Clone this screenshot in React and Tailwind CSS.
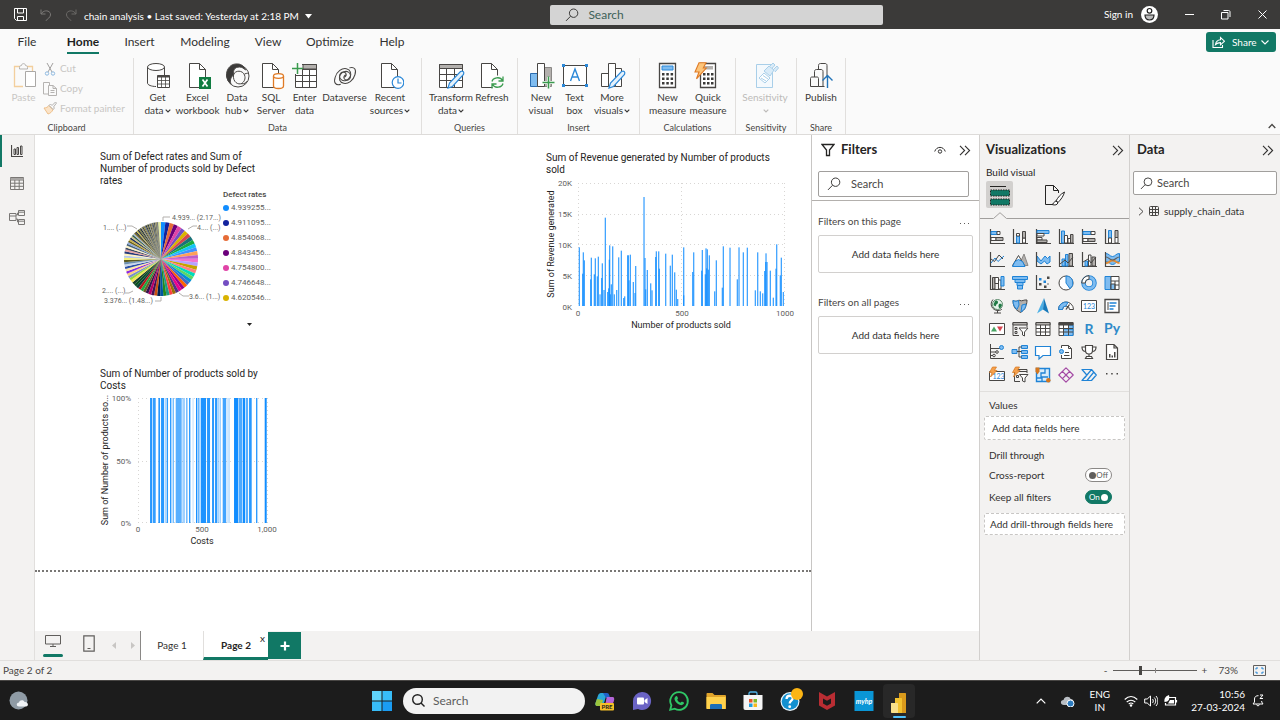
import React from "react";

const K = "#484644";
const B = "#1f83d6";
const L = "#7fbcf0";
const G = "#b3b0ad";

function Svg({ w = 16, h, vb, className = "", children }) {
  return (
    <svg
      width={w}
      height={h || w}
      viewBox={vb || `0 0 ${w} ${h || w}`}
      fill="none"
      stroke={K}
      strokeWidth="1"
      className={`shrink-0 ${className}`}
      aria-hidden="true"
    >
      {children}
    </svg>
  );
}

const Chevron = ({ className = "" }) => (
  <Svg w={6} h={4} className={`ml-px inline-block align-middle ${className}`}>
    <path d="M.7.7 3 3 5.3.7" stroke="currentColor" strokeWidth="1.2" />
  </Svg>
);

const DoubleChevron = () => (
  <Svg w={12} h={11}>
    <path d="M1 .8 5.6 5.5 1 10.2M6 .8l4.6 4.7L6 10.2" stroke="#323130" strokeWidth="1.1" />
  </Svg>
);

const Magnifier = ({ w = 14, className = "" }) => (
  <Svg w={w} vb="0 0 14 14" className={className}>
    <circle cx="8.6" cy="5.2" r="4.2" stroke="#3b3a39" />
    <path d="M5.6 8.2 1 12.9" stroke="#3b3a39" />
  </Svg>
);

/* ---------- Ribbon icons ---------- */

const Doc = () => (
  <>
    <path d="M2.5 1.5h10l6 6v18h-16z" fill="#fff" />
    <path d="M12.5 1.5v6h6" />
  </>
);

const ribbonIcons = {
  getData: (
    <>
      <path d="M2.5 5v16c0 2 4 3.500 8.500 3.500M19.500 5v8" />
      <ellipse cx="11" cy="5" rx="8.500" ry="3.500" fill="#fff" />
      <path d="M12.500 13.500h12v12h-12z" fill="#fff" />
      <path d="M12.500 14.500h12" strokeWidth="2" />
      <path d="M12.500 18.500h12M12.500 22h12M16.500 15v10M20.500 15v10" strokeWidth=".8" />
    </>
  ),
  excel: (
    <>
      <g transform="translate(2 0)"><Doc /></g>
      <path d="M14 15h12v12H14z" fill="#107c41" stroke="none" />
      <path d="m17.500 17.500 5 7m0-7-5 7" stroke="#fff" strokeWidth="1.700" />
    </>
  ),
  hub: (
    <>
      <circle cx="14" cy="14" r="11" />
      <path d="M14 2C7 1 2 7 2.500 14c.3 3 2 6 4.500 8-1.500-4 0-7 3-9.500C8.500 8 11 5 15.500 5 18 5 20 6.500 21.500 8 20.500 4.500 17 2 14 2z" fill="#3b3a39" />
      <path d="M9.500 12.500c2-4.500 9-4.500 11 .5 1.500 4-.5 7-3 8.500-3 1.500-9-1-8-9z" />
      <path d="M20.500 12c2.500-1 4-1 4.500 0M17 21.700c3.500.500 5-1 6.500-2.700" />
    </>
  ),
  sql: (
    <>
      <g transform="translate(2 0)"><Doc /></g>
      <path d="M15.500 14v10c0 1.500 2 2.500 5 2.500s5-1 5-2.500V14" fill="#fff" stroke="#e07b26" strokeWidth="1.300" />
      <ellipse cx="20.500" cy="14" rx="5" ry="2.300" fill="#fff" stroke="#e07b26" strokeWidth="1.300" />
    </>
  ),
  enter: (
    <>
      <path d="M3.500 2.500h21v23h-21z" fill="#fff" />
      <path d="M11 2.500h13.500V7H11z" fill={G} />
      <path d="M3.500 13.500h21M3.500 19.500h21M10.500 7v18.500M17.500 7v18.500M11 7.500h13.500" />
      <path d="M0 1h10v11H0z" fill="#fafafa" stroke="none" />
      <path d="M5.500 1v11M0 6.500h11" stroke="#3a9b4e" strokeWidth="1.500" />
    </>
  ),
  dataverse: (
    <g transform="translate(1 2) scale(.86)" strokeWidth="1.200">
      <path d="M19 4.500c6-2 8.500 2 6.500 8-2 7-8 11-13 10-5-1-6.500-6-4-10 2-3.500 6.500-5 9.500-3 3 1.800 3 6 1 8-2 2-5 1.500-6-.5-1-2 .5-4.500 2.500-4" />
      <path d="M9 23.500c-6 2-8.500-2-6.500-8 2-7 8-11 13-10 5 1 6.500 6 4 10-2 3.500-6.500 5-9.500 3-3-1.800-3-6-1-8 2-2 5-1.500 6 .5 1 2-.5 4.500-2.500 4" />
    </g>
  ),
  recent: (
    <>
      <g transform="translate(2 0)"><Doc /></g>
      <circle cx="21" cy="20.500" r="5.800" fill="#fff" stroke="#2b88d8" strokeWidth="1.200" />
      <path d="M21 16.500v4.500h3.500" stroke="#2b88d8" strokeWidth="1.200" />
    </>
  ),
  transform: (
    <>
      <path d="M1.500 2.500h23v23h-23z" fill="#fff" />
      <path d="M1.500 2.500h23v4h-23z" fill={G} />
      <path d="M1.500 12.500h23M1.500 18.500h23M8.500 7v18.500M16.500 7v18.500" />
      <path d="m10 26 1.500-5L22.500 9.500c2.500-1 4 .5 3 3L14.500 24.500z" fill="#e4f1fb" stroke="#2b88d8" strokeWidth="1.200" />
    </>
  ),
  refresh: (
    <>
      <Doc />
      <circle cx="18.500" cy="20.500" r="7" fill="#fafafa" stroke="none" />
      <path d="M13 19.500c1-4 8-5.500 10.500-1M24 14.500v4.500h-4.500M24 21.500c-1 4-8 5.500-10.500 1M13 26.500V22h4.500" stroke="#3a9b4e" strokeWidth="1.300" />
    </>
  ),
  newVisual: (
    <>
      <path d="M2.500 11.500h7v13h-7z" fill={L} stroke="#2b6cb0" />
      <path d="M16.500 5.500h7v19h-7z" fill={G} stroke="#8a8886" />
      <path d="M9.500 1.500h7v23h-7z" fill="#fff" />
      <path d="M20.500 15v11.500M14.500 20.500h12" stroke="#fafafa" strokeWidth="3" />
      <path d="M20.500 14.500v12M14.500 20.500h12" stroke="#3a9b4e" strokeWidth="1.500" />
    </>
  ),
  textBox: (
    <>
      <path d="M1.500 3.500h23v20h-23z" fill="#fff" />
      <path d="M0 2h3v3H0zM23 2h3v3h-3zM0 22h3v3H0zM23 22h3v3h-3z" fill="#2b88d8" stroke="none" />
      <path d="m8.500 19 4.500-12 4.500 12M10 15h6" stroke="#2b88d8" strokeWidth="1.400" />
    </>
  ),
  moreVisuals: (
    <>
      <path d="M2.500 11.500h7v13h-7zM16.500 6.500h6v18h-6z" fill="#fff" />
      <path d="M9.500 1.500h7v23h-7z" fill="#fff" />
      <path d="m10 26 1.500-5L22.500 9.500c2.500-1 4 .5 3 3L14.500 24.500z" fill="#e4f1fb" stroke="#2b88d8" strokeWidth="1.200" />
    </>
  ),
  calc: (
    <>
      <path d="M4.500 1.500h16v24h-16z" fill="#fff" strokeWidth="1.300" />
      <path d="M7 4h11v4H7z" fill="#7fbcf0" stroke="#2b88d8" />
      <path d="M7 11h2.500v2.500H7zM11.300 11h2.500v2.500h-2.500zM15.600 11h2.500v2.500h-2.500zM7 15.500h2.500V18H7zM11.300 15.500h2.500V18h-2.500zM15.600 15.500h2.500V18h-2.500zM7 20h2.500v2.500H7zM11.300 20h2.500v2.500h-2.500zM15.600 20h2.500v2.500h-2.500z" fill="#3b3a39" stroke="none" />
    </>
  ),
  quick: (
    <>
      <path d="M5.500 1.500h15v24h-15z" fill="#fff" strokeWidth="1.300" />
      <path d="M8 4h10v3.500H8z" fill={G} stroke="none" />
      <path d="M8 11h2.500v2.500H8zM12 11h2.500v2.500H12zM16 11h2.500v2.500H16zM8 15.500h2.500V18H8zM12 15.500h2.500V18H12zM16 15.500h2.500V18H16zM8 20h2.500v2.500H8zM12 20h2.500v2.500H12zM16 20h2.500v2.500H16z" fill="#3b3a39" stroke="none" />
      <path d="M4 .8h7L8.300 6h3L1.500 16.800 4 10H0z" fill="#fcc57b" stroke="#e07b26" strokeWidth="1.100" />
    </>
  ),
  sensitivity: (
    <g stroke="#a9cfe9">
      <path d="M4.500 2.500h16v23h-16z" fill="#f4f9fd" />
      <path d="m7 16 5-5 6 5-5 5z" fill="#fff" />
      <path d="m9 16 5 3M11 13.500l5 3.500" />
      <path d="m12 9 5-5 5 4-4 6zM18 4l3-3 2 2-2 2.500M21 8l4-4 1.500 2-3.500 4" fill="#d9ebf8" />
    </g>
  ),
  publish: (
    <>
      <path d="M10.500 24.500V3.500c0-1.500 1-2 2-2h4.500c1 0 2 .5 2 2v12" />
      <path d="M6.500 16V9.500c0-1.500 1-2 2-2h4.500c1 0 2 .5 2 2v15" fill="#fafafa" />
      <path d="M2.500 24.500v-8c0-1 .5-1.500 1.500-1.500h5c1 0 1.500.5 1.500 1.500v8zM10.500 24.500h6" fill="#fafafa" />
      <path d="M19.500 26V14M14.500 18.500l5-5 5 5" stroke="#2173b8" strokeWidth="1.400" />
    </>
  ),
};

const ribbonGroups = [
  {
    name: "Data",
    cls: "w-[288px] pl-[6px]",
    items: [
      ["getData", "Get", "data", true, "w-[35px]"],
      ["excel", "Excel", "workbook", false, "w-[45px]"],
      ["hub", "Data", "hub", true, "w-[34px]"],
      ["sql", "SQL", "Server", false, "w-[34px]"],
      ["enter", "Enter", "data", false, "w-[33px]"],
      ["dataverse", "Dataverse", "", false, "w-[47px]"],
      ["recent", "Recent", "sources", true, "w-[44px]"],
    ],
  },
  {
    name: "Queries",
    cls: "w-[96px] pl-[6px]",
    items: [
      ["transform", "Transform", "data", true, "w-[46px]"],
      ["refresh", "Refresh", "", false, "w-[36px]"],
    ],
  },
  {
    name: "Insert",
    cls: "w-[122px] pl-[6px]",
    items: [
      ["newVisual", "New", "visual", false, "w-[34px]"],
      ["textBox", "Text", "box", false, "w-[33px]"],
      ["moreVisuals", "More", "visuals", true, "w-[42px]"],
    ],
  },
  {
    name: "Calculations",
    cls: "w-[96px] pl-[8px]",
    items: [
      ["calc", "New", "measure", false, "w-[39px]"],
      ["quick", "Quick", "measure", false, "w-[42px]"],
    ],
  },
  {
    name: "Sensitivity",
    cls: "w-[61px] pl-[6px]",
    items: [["sensitivity", "Sensitivity", "", true, "w-[46px]", true]],
  },
  {
    name: "Share",
    cls: "w-[49px] pl-[3px]",
    items: [["publish", "Publish", "", false, "w-[42px]"]],
  },
];

function RibbonButton({ item }) {
  const [icon, line1, line2, menu, width, disabled] = item;
  return (
    <button
      disabled={disabled}
      className={`flex shrink-0 flex-col items-center whitespace-nowrap text-[10px] leading-[13px] ${width} ${
        disabled ? "text-[#bdbbb9]" : "text-[#3b3a39]"
      }`}
    >
      <Svg w={28} vb="-1 0 28 28">{ribbonIcons[icon]}</Svg>
      <span className="mt-px">{line1}</span>
      <span>
        {line2}
        {menu && <Chevron />}
      </span>
    </button>
  );
}

function TitleBar() {
  return (
    <header className="grid h-[29px] shrink-0 grid-cols-[43fr_26fr_31fr] items-center bg-[#3b3a39] text-[10px] text-white">
      <div className="flex items-center pl-[14px]">
        <button aria-label="Save">
          <Svg w={13}>
            <path d="M.5.500h12v12H2.500l-2-2zM3.500.5v4.500h6V.5M3.500 12.500v-4h6v4" stroke="#fff" />
          </Svg>
        </button>
        <button aria-label="Undo" className="ml-[13px]">
          <Svg w={12}>
            <path d="M1 .5V5h4.500M1 5c3-5 10-3.500 9.500 1-.3 2.500-3 4-5 6" stroke="#7b7977" />
          </Svg>
        </button>
        <button aria-label="Redo" className="ml-[13px]">
          <Svg w={12}>
            <path d="M11 .5V5H6.500M11 5C8 0 1 1.500 1.500 6c.3 2.500 3 4 5 6" stroke="#6b6967" />
          </Svg>
        </button>
        <button className="ml-[7px] mt-[3px] flex items-center gap-[6px] whitespace-nowrap">
          chain analysis • Last saved: Yesterday at 2:18 PM
          <Svg w={7} h={5}>
            <path d="M0 0h7L3.500 4.500z" fill="#fff" stroke="none" />
          </Svg>
        </button>
      </div>
      <label className="flex h-[20px] items-center rounded-xs bg-[#d4d4d4] pl-[15px]">
        <Magnifier />
        <input
          aria-label="Search"
          placeholder="Search"
          className="ml-[9px] min-w-0 flex-1 bg-transparent text-[12px] text-[#333] outline-none placeholder:text-[#3d6157]"
        />
      </label>
      <div className="flex items-center justify-end pr-[13px]">
        <button className="flex items-center gap-[8px]">
          Sign in
          <Svg w={17}>
            <circle cx="8.500" cy="8.500" r="8.500" fill="#fff" stroke="none" />
            <circle cx="8.500" cy="4.800" r="2.300" stroke="#222" strokeWidth="1.200" />
            <path d="M4 9h9c0 3-1.500 5-4.500 5S4 12 4 9z" fill="#bbb" stroke="#222" strokeWidth="1.200" />
          </Svg>
        </button>
        <button aria-label="Minimize" className="ml-[27px]">
          <Svg w={9}><path d="M0 4.500h9" stroke="#fff" /></Svg>
        </button>
        <button aria-label="Restore" className="ml-[27px]">
          <Svg w={10}>
            <path d="M.5 2.500h6.500v6.500H.5zM2.500.500h5c1 0 1.500.5 1.500 1.500v5" stroke="#fff" />
          </Svg>
        </button>
        <button aria-label="Close" className="ml-[27px]">
          <Svg w={9}><path d="m.5.500 8 8m0-8-8 8" stroke="#fff" /></Svg>
        </button>
      </div>
    </header>
  );
}

const menuTabs = [
  ["File", "w-[54px]"],
  ["Home", "w-[58px]"],
  ["Insert", "w-[55px]"],
  ["Modeling", "w-[76px]"],
  ["View", "w-[50px]"],
  ["Optimize", "w-[74px]"],
  ["Help", "w-[50px]"],
];

function Ribbon() {
  return (
    <section className="shrink-0 border-b border-[#dddbd9] bg-[#fafafa]">
      <div className="flex h-[29px] items-center justify-between pr-[4px]">
        <nav className="flex h-full text-[12px] text-[#323130]">
          {menuTabs.map(([name, width]) => (
            <button key={name} className={`flex flex-col items-center ${width}`}>
              <span
                className={`flex h-[25px] items-center ${
                  name === "Home" ? "border-b-2 border-[#117865] pt-[2px] font-bold text-[#201f1e]" : ""
                }`}
              >
                {name}
              </span>
            </button>
          ))}
        </nav>
        <button className="mb-[3px] flex h-[20px] w-[70px] items-center rounded-[3px] bg-[#117865] pl-[6px] text-[10px] text-white">
          <Svg w={13} h={12}>
            <path d="M1 4v7.500h9.500V9M3.500 8.500c.5-3 2-4.500 5-4.700V1.500l4 3.700-4 3.600V6.600c-2 0-3.500.5-5 1.900z" stroke="#fff" strokeWidth="1.100" />
          </Svg>
          <span className="ml-[7px]">Share</span>
          <Svg w={8} h={5} className="ml-[4px]">
            <path d="m.5.500 3.500 3.500L7.500.5" stroke="#fff" strokeWidth="1.100" />
          </Svg>
        </button>
      </div>
      <div className="flex h-[76px] items-stretch">
        <div className="flex w-[133px] shrink-0 flex-col">
          <div className="flex flex-1 text-[10px] text-[#c8c6c4]">
            <button disabled className="flex w-[43px] flex-col items-center pl-[4px] pt-[4px] leading-[13px]">
              <Svg w={28}>
                <path d="M10 4.500H4.500v20H13M17 4.500h5.500V9" stroke="#f3cf9d" strokeWidth="1.300" />
                <path d="M9.500 5.500c0-1.500 1-2 2-2 0-2.500 4-2.500 4 0 1 0 2 .5 2 2v1.500h-8z" stroke="#b5b3b1" />
                <path d="M15.500 9.500h10v15h-10z" fill="#fff" stroke="#aaa8a6" />
              </Svg>
              <span className="mt-px">Paste</span>
            </button>
            <div className="flex flex-col">
              <button disabled className="flex h-[20px] items-center gap-[3px] pt-px">
                <Svg w={14}>
                  <path d="m4 1 5 9M10 1 5 10" stroke="#a3a1a0" />
                  <circle cx="4" cy="11.500" r="1.700" stroke="#8db9e0" />
                  <circle cx="10" cy="11.500" r="1.700" stroke="#8db9e0" />
                </Svg>
                Cut
              </button>
              <button disabled className="flex h-[20px] items-center gap-[3px] pt-px">
                <Svg w={14}>
                  <path d="M6 12H.5V.500h6V3" stroke="#b5b3b1" />
                  <path d="M5.500 3.500H10l3.500 3v7h-8zM10 3.500v3h3.500M7.500 8.500h4M7.500 10.500h4" stroke="#b5b3b1" />
                </Svg>
                Copy
              </button>
              <button disabled className="flex h-[20px] items-center gap-[3px] whitespace-nowrap">
                <Svg w={14}>
                  <path d="M1 7c2 0 4-1 5-2.500l4 4C9 11 7 12.500 5 13z" fill="#fbe3c7" stroke="#eec08b" />
                  <path d="m6 4.500 1.500-1.500L9 4.500 12.500 1 13.500 2 10.500 6l1 1-1.500 1.500z" stroke="#b5b3b1" />
                </Svg>
                Format painter
              </button>
            </div>
          </div>
          <span className="h-[13px] text-center text-[9px] leading-[13px] text-[#484644]">Clipboard</span>
        </div>
        {ribbonGroups.map((g) => (
          <div key={g.name} className="flex shrink-0 flex-col">
            <div className={`flex flex-1 border-l border-[#e1dfdd] pt-[4px] ${g.cls}`}>
              {g.items.map((it) => (
                <RibbonButton key={it[0]} item={it} />
              ))}
            </div>
            <span className="h-[13px] border-l border-[#e1dfdd] text-center text-[9px] leading-[13px] text-[#484644]">
              {g.name}
            </span>
          </div>
        ))}
        <div className="flex flex-1 items-end justify-end border-l border-[#e1dfdd] pb-[5px] pr-[4px]">
          <button aria-label="Collapse ribbon" className="flex">
            <Svg w={8} h={6}><path d="M.7 5 4 1.500 7.300 5" strokeWidth="1.300" /></Svg>
          </button>
        </div>
      </div>
    </section>
  );
}

function ViewRail() {
  return (
    <nav className="flex w-[35px] shrink-0 flex-col border-r border-[#e1dfdd] bg-[#f3f2f1]">
      <button aria-label="Report view" className="flex h-[32px] items-center border-l-2 border-[#117865] pl-[9px]">
        <Svg w={12}>
          <path d="M.5 0v11.500H12" strokeWidth="1.200" />
          <path d="M3 4h1.500v5.500H3zM6 2.500h1.500v7H6zM9.500 1h1.500v8.500H9.500z" />
        </Svg>
      </button>
      <button aria-label="Table view" className="flex h-[33px] items-center pl-[10px]">
        <Svg w={14} h={13}>
          <path d="M.5.500h13v12H.5zM.5 3h13M.5 6.200h13M.5 9.300h13M4.800 3v9.500M9.200 3v9.500" stroke="#797775" />
          <path d="M.5 1h13v2H.5z" fill="#a8a6a4" stroke="none" />
        </Svg>
      </button>
      <button aria-label="Model view" className="flex h-[34px] items-center pl-[9px]">
        <Svg w={16} h={15}>
          <path d="M.5 3.500h6.500v7H.5zM9.500.5h6v5h-6zM9.500 9.500h6v5h-6zM.5 6H7M9.500 2.200h6M9.500 11.200h6M7 5h1.500V3h1M7 9h1.500v3h1" stroke="#797775" />
        </Svg>
      </button>
    </nav>
  );
}

/* ---------- Report visuals ---------- */

const CHART = "font-[Roboto,sans-serif]";

const sliceColors = [
  "#118dff", "#12239e", "#e66c37", "#6b007b", "#e044a7", "#744ec2", "#d9b300", "#d64550", "#197278", "#1aab40",
  "#15c6f4", "#4092ff", "#ffa058", "#be5dc9", "#f472d0", "#b5a1ff", "#c4a200", "#ff8080", "#00dbbc", "#5bd667",
  "#0091d5", "#4668c5", "#ff6300", "#99008a", "#ec008c", "#533285", "#99700a", "#ff4141", "#1f9a85", "#25891c",
  "#0057a2", "#002050", "#c94f0f", "#450f54", "#b60064", "#34124f", "#6a5a29", "#1aab40", "#ba141a", "#0c3d37",
  "#0b511f", "#1b3f2a", "#f9e55a", "#9ad93b", "#7c8fd0", "#ffd27a", "#8a2be2", "#ffe6a8", "#2a4fa8", "#c9d7ea",
  "#6d8fb0", "#5b5b1f", "#f6f07a", "#b7c9e8", "#fff2c0", "#273a7a", "#e8a0a0", "#3c4a63", "#fdf3c9", "#46627a",
  "#8fa9d8", "#6b5f12", "#c8b04a", "#1f2f5c", "#c9c08a", "#2f5a46", "#a7b6cc", "#75681c", "#2b2f3a", "#c7b94e",
];

const lateColors = ["#30343a", "#7a7d45", "#1d2733", "#9b9a70", "#3f4148", "#8f8432", "#5d6a78"];

const slices = (() => {
  const weights = Array.from({ length: 99 }, (_, i) => 2.15 - i * 0.0205);
  const total = weights.reduce((a, b) => a + b, 0);
  let angle = -Math.PI / 2;
  return weights.map((w, i) => {
    const next = angle + (w / total) * Math.PI * 2;
    const p = (a) => `${(37 * Math.cos(a)).toFixed(2)} ${(37 * Math.sin(a)).toFixed(2)}`;
    const d = `M0 0L${p(angle)}A37 37 0 0 1 ${p(next)}Z`;
    angle = next;
    return { d, fill: i < sliceColors.length ? sliceColors[i] : i > 91 ? "#d9e48a" : lateColors[i % 7] };
  });
})();

const legend = [
  ["4.939255...", "#118dff"],
  ["4.911095...", "#12239e"],
  ["4.854068...", "#e66c37"],
  ["4.843456...", "#6b007b"],
  ["4.754800...", "#e044a7"],
  ["4.746648...", "#744ec2"],
  ["4.620546...", "#d9b300"],
];

function VisualTitle({ lines }) {
  return (
    <h3 className="text-[10px] leading-[12px] text-[#252423]">
      {lines.map((l) => (
        <span key={l} className="block whitespace-nowrap">{l}</span>
      ))}
    </h3>
  );
}

function DefectPie() {
  return (
    <article className={`absolute left-[65px] top-[16px] w-[172px] ${CHART}`}>
      <VisualTitle lines={["Sum of Defect rates and Sum of", "Number of products sold by Defect", "rates"]} />
      <div className="flex">
        <svg width="123" height="120" className="shrink-0 overflow-visible" fontSize="7" fill="#605e5c" stroke="none">
          <g transform="translate(61 72)">
            {slices.map((s, i) => (
              <path key={i} d={s.d} fill={s.fill} />
            ))}
          </g>
          <path d="M63 34v-4h7M88 42l5-3h4M37 42l-5-3h-5M33 104l-4 2h-4M61 110v4h-6M79 106l4 3h6" fill="none" stroke="#b3b0ad" />
          <text x="72" y="33">4.939... (2.17...)</text>
          <text x="97" y="43">4.... (...)</text>
          <text x="3" y="43">1.... (...)</text>
          <text x="2" y="106">2.... (...)</text>
          <text x="4" y="116">3.376... (1.48...)</text>
          <text x="89" y="112">3.6... (1...)</text>
        </svg>
        <div className="pt-[3px]">
          <p className="text-[8px] font-medium leading-[10px] text-[#484644]">Defect rates</p>
          <ul>
            {legend.map(([label, color]) => (
              <li key={label} className="flex h-[15px] items-center gap-[2px] text-[8px] text-[#605e5c]">
                <span className="size-[6px] rounded-full" style={{ background: color }} />
                {label}
              </li>
            ))}
          </ul>
          <Svg w={5} h={3} className="ml-[24px] mt-[18px]">
            <path d="M0 0h5L2.500 3z" fill="#252423" stroke="none" />
          </Svg>
        </div>
      </div>
    </article>
  );
}

/* Column positions and heights, in thirds of a pixel of the plot area. */
const revenueColumns = [
  [3, 176], [13, 97], [15, 161], [18, 137], [37, 80], [39, 145], [48, 95], [51, 143], [57, 89], [60, 148],
  [65, 35], [70, 84], [72, 128], [77, 48], [81, 265], [88, 42], [91, 53], [93, 139], [94, 182], [96, 35],
  [99, 65], [103, 179], [108, 35], [115, 48], [121, 146], [129, 166], [136, 24], [139, 29], [148, 152], [150, 152],
  [152, 77], [156, 154], [165, 72], [170, 39], [172, 120], [197, 327], [200, 144], [202, 50], [207, 108], [217, 68],
  [221, 47], [232, 147], [234, 164], [241, 164], [243, 112], [262, 157], [276, 121], [282, 154], [289, 101], [294, 49],
  [298, 21], [316, 176], [316, 32], [343, 102], [346, 161], [370, 106], [372, 168], [381, 95], [383, 173], [385, 113],
  [387, 170], [390, 109], [393, 152], [409, 44], [414, 137], [432, 55], [435, 179], [455, 175], [477, 80], [482, 176],
  [495, 161], [507, 175], [531, 47], [538, 161], [546, 44], [553, 38], [559, 105], [563, 158], [562, 132], [566, 132],
  [576, 106], [585, 25], [593, 112], [595, 185], [606, 92], [609, 145], [615, 42],
];

function RevenueColumns() {
  return (
    <article className={`absolute left-[511px] top-[17px] w-[260px] ${CHART}`}>
      <VisualTitle lines={["Sum of Revenue generated by Number of products", "sold"]} />
      <svg width="256" height="160" fontSize="8" fill="#605e5c" className="-mt-[2px] overflow-visible">
        <g stroke="#d8d6d4" strokeDasharray="1 3">
          {[9, 40, 70, 101].map((y) => (
            <path key={y} d={`M32 ${y}.500H239`} />
          ))}
          <path d="M32.500 9v123M135.500 9v123M238.500 9v123" />
        </g>
        {revenueColumns.map(([x, h], i) => (
          <rect key={i} x={32.3 + x / 3 - 0.6} y={132 - h / 3} width="1.3" height={h / 3} fill="#118dff" fillOpacity=".8" />
        ))}
        <g textAnchor="end">
          {["20K", "15K", "10K", "5K", "0K"].map((t, i) => (
            <text key={t} x="26" y={12 + i * 31}>{t}</text>
          ))}
        </g>
        <g textAnchor="middle">
          <text x="32" y="142">0</text>
          <text x="136" y="142">500</text>
          <text x="239" y="142">1000</text>
          <text x="135" y="154" fontSize="9" fill="#252423">Number of products sold</text>
          <text transform="translate(8 70) rotate(-90)" fontSize="9" fill="#252423">
            Sum of Revenue generated
          </text>
        </g>
      </svg>
    </article>
  );
}

/* Start, width and opacity of each column, in thirds of a pixel. */
const costColumns = [
  [37, 6, 0.9], [45, 9, 0.85], [62, 5, 0.9], [70, 9, 0.9], [81, 8, 0.35], [88, 3, 0.9], [97, 4, 0.9], [105, 3, 0.8],
  [114, 18, 0.7], [134, 8, 0.4], [146, 3, 0.9], [154, 4, 0.9], [165, 2, 0.4], [175, 4, 1], [182, 3, 1], [189, 16, 0.95],
  [208, 9, 0.9], [223, 6, 0.9], [232, 7, 0.9], [242, 3, 0.6], [247, 2, 0.6], [255, 10, 0.8], [267, 2, 0.5],
  [272, 4, 0.35], [289, 13, 1], [304, 9, 0.75], [315, 7, 1], [324, 7, 0.7], [334, 8, 0.9], [355, 4, 0.9], [381, 6, 1],
];

function CostColumns() {
  return (
    <article className={`absolute left-[65px] top-[233px] w-[186px] ${CHART}`}>
      <VisualTitle lines={["Sum of Number of products sold by", "Costs"]} />
      <svg width="186" height="160" fontSize="8" fill="#605e5c" className="-mt-px overflow-visible">
        <g stroke="#d8d6d4" strokeDasharray="1 3">
          <path d="M38 7.500h130M38 70.500h130M38 131.500h130M38.500 7v125M102.500 7v125M167.500 7v125" />
        </g>
        {costColumns.map(([x, w, o]) => (
          <rect key={x} x={37.7 + x / 3} y="7" width={w / 3} height="125" fill="#118dff" fillOpacity={o} />
        ))}
        <g textAnchor="end">
          <text x="31" y="10">100%</text>
          <text x="31" y="73">50%</text>
          <text x="31" y="135">0%</text>
        </g>
        <g textAnchor="middle">
          <text x="38" y="141">0</text>
          <text x="102" y="141">500</text>
          <text x="167" y="141">1,000</text>
          <text x="102" y="153" fontSize="9" fill="#252423">Costs</text>
          <text transform="translate(8 69) rotate(-90)" fontSize="9" fill="#252423">
            Sum of Number of products so...
          </text>
        </g>
      </svg>
    </article>
  );
}

function FieldWell({ children, cls }) {
  return <div className={`flex items-center bg-white text-[#323130] ${cls}`}>{children}</div>;
}

function Filters() {
  return (
    <aside className="w-[168px] shrink-0 border-l border-[#c8c6c4] bg-white text-[10px] text-[#484644]">
      <div className="flex h-[30px] items-center pl-[9px] pr-[8px]">
        <Svg w={14}>
          <path d="M1 1.500h12L8.500 7v5.500h-3V7z" stroke="#252423" strokeWidth="1.300" />
        </Svg>
        <h2 className="ml-[6px] flex-1 text-[13px] font-bold text-[#252423]">Filters</h2>
        <button aria-label="Show filters">
          <Svg w={12} h={9}>
            <path d="M.7 5.500C2.500 0 9.500 0 11.300 5.500" stroke="#323130" />
            <circle cx="6" cy="5.500" r="1.700" stroke="#323130" />
          </Svg>
        </button>
        <button aria-label="Collapse filters" className="ml-[13px]"><DoubleChevron /></button>
      </div>
      <div className="border-b border-[#b3b0ad] px-[6px] pb-[3px] pt-[6px]">
        <label className="mr-[4px] flex h-[26px] items-center rounded-xs border border-[#a19f9d] pl-[8px]">
          <Magnifier />
          <input
            aria-label="Search filters"
            placeholder="Search"
            className="ml-[10px] w-[90px] bg-transparent text-[11px] outline-none placeholder:text-[#484644]"
          />
        </label>
      </div>
      {["Filters on this page", "Filters on all pages"].map((t, i) => (
        <section key={t} className={`px-[6px] ${i ? "pt-[21px]" : "pt-[12px]"}`}>
          <div className="flex h-[16px] items-center justify-between pr-[4px]">
            <h3>{t}</h3>
            <button aria-label={`${t} options`} className="flex pt-[6px]">
              <Svg w={9} h={2}>
                <path d="M0 0h1v1H0zM4 0h1v1H4zM8 0h1v1H8z" fill="#605e5c" stroke="none" />
              </Svg>
            </button>
          </div>
          <FieldWell cls="mt-[6px] h-[38px] justify-center rounded-xs border border-[#d2d0ce]">Add data fields here</FieldWell>
        </section>
      ))}
    </aside>
  );
}

const axes = <path d="M1.500 0v14.500H16" strokeWidth="1.200" />;
const bolt = <path d="M3.500 0h4L5.500 3.500h2.500L1.500 10 3 5.500H.5z" fill="#f5a04c" stroke="#d5761d" strokeWidth=".7" />;

const visualIcons = [
  ["Stacked bar chart", <>{axes}<path d="M2 2.500h6v3H2z" fill={L} stroke={B} /><path d="M8 2.500h3v3H8zM2 8.500h5v3H2z" fill="#fff" /><path d="M7 8.500h7v3H7z" fill={G} /></>],
  ["Stacked column chart", <>{axes}<path d="M4.500 7h3v7h-3z" fill={L} stroke={B} /><path d="M4.500 4.500h3V7h-3zM10.500 9h3v5h-3z" fill="#fff" /><path d="M10.500 2.500h3V9h-3z" fill={G} /></>],
  ["Clustered bar chart", <>{axes}<path d="M2 1.500h12v3H2z" fill={L} stroke={B} /><path d="M2 4.500h7V7H2z" fill="#fff" /><path d="M2 8.500h5V11H2z" fill="#fff" /><path d="M2 11h10v2.500H2z" fill={G} /></>],
  ["Clustered column chart", <>{axes}<path d="M3.500 2h3v12h-3z" fill={L} stroke={B} /><path d="M6.500 6.500h3V14h-3zM10 9.500h2.500V14H10z" fill="#fff" /><path d="M12.500 5.500H15V14h-2.500z" fill={G} /></>],
  ["100% stacked bar chart", <>{axes}<path d="M2 2.500h8v3H2z" fill={L} stroke={B} /><path d="M10 2.500h4v3h-4zM2 9.500h5v3H2z" fill="#fff" /><path d="M7 9.500h7v3H7z" fill={G} /></>],
  ["100% stacked column chart", <>{axes}<path d="M4.500 1.500h3V9h-3z" fill={L} stroke={B} /><path d="M4.500 9h3v5h-3zM11 8.500h3V14h-3z" fill="#fff" /><path d="M11 1.500h3v7h-3z" fill={G} /></>],
  ["Line chart", <>{axes}<path d="m2 11 4-5 3 3.500L15 4" stroke={B} /><path d="m2 7 3.500 2.500L10 3l4 4" /></>],
  ["Area chart", <><path d="M7 13.500 12 2l4 11.500z" fill={G} stroke="#8a8886" /><path d="m.5 13.500 6-10 6 10z" fill="#fff" /><path d="m.5 14.500 2.500-5 3.500-2 4 2 2.500 5z" fill={L} stroke={B} /></>],
  ["Stacked area chart", <><path d="m2 4 4 5 4-5 2.500 2.500L15 4v6l-3 2-2.500-3L6 12l-4-3z" fill={L} stroke={B} />{axes}</>],
  ["Line and stacked column chart", <>{axes}<path d="M4 7h3v7H4z" fill={L} stroke={B} /><path d="M7.500 2.500H10V14H7.500z" fill={L} stroke={B} /><path d="M11 1.500h3.500V14H11z" fill={G} /><path d="m2 12 5-4 3 3 5-6" /></>],
  ["Line and clustered column chart", <>{axes}<path d="M4 9h2.500v5H4z" fill={L} stroke={B} /><path d="M7.500 3H10v11H7.500z" fill="#fff" /><path d="M11 5h3.500v9H11z" fill={G} /><path d="m2 10 5-3 3 4 5-6" /></>],
  ["Ribbon chart", <><path d="M1.500 1.500c4 0 4 3 7 3s3-3 7-3v8c-4 0-4 3-7 3s-3-3-7-3z" fill={L} stroke={B} /><path d="M2 11c4 0 3-2.500 6.500-2.500S12 11 15.500 11" stroke="#e08b36" strokeWidth="2" /><path d="M2 5c3 0 3 3 6.500 3S12 5 15.500 5" stroke="#605e5c" strokeWidth="1.200" />{axes}</>],
  ["Waterfall chart", <>{axes}<path d="M3.500 2.500H6V14H3.500z" fill={G} /><path d="M6 2.500h3.500v6H6z" fill="#fff" /><path d="M9.500 5h2.500v9H9.500z" fill="#fff" /><path d="M12 1.500h3V11h-3z" fill={L} stroke={B} /></>],
  ["Funnel", <path d="M.5 1.500h15v3H.5zM3 4.500h10v3H3zM5 7.500h6v3H5zM5.500 10.500h5V14h-5z" fill={L} stroke={B} />],
  ["Scatter chart", <>{axes}<path d="M4 8h2.500v2.500H4zM9 10.500h2.500V13H9zM12 1.500h2.500V4H12z" fill={K} stroke="none" /><path d="M4 3h2.500v2.500H4zM8.500 5.500H11V8H8.500z" fill={B} stroke="none" /><path d="M12 8h2v2h-2z" fill={G} stroke="none" /></>],
  ["Pie chart", <><circle cx="8" cy="8" r="7" fill="#fff" /><path d="M8 1a7 7 0 0 1 4 12.700L8 8z" fill={L} stroke={B} /></>],
  ["Donut chart", <><circle cx="8" cy="8" r="5.500" stroke={B} strokeWidth="4.500" /><circle cx="8" cy="8" r="5.500" stroke={L} strokeWidth="2.800" /><path d="M2.500 8A5.500 5.500 0 0 1 8 2.500" stroke="#fff" strokeWidth="3" /><path d="M.7 8A7.300 7.300 0 0 1 8 .7v3.500A3.800 3.800 0 0 0 4.200 8z" /></>],
  ["Treemap", <><path d="M1 1.500h6v13H1z" fill={L} stroke={B} /><path d="M7 1.500h8v13H7z" fill="#fff" /><path d="M7 9h4v5.500H7z" fill={L} /><path d="M7 6h8M11 6v8.500M11 10h4" /></>],
  ["Map", <><circle cx="8.500" cy="6.500" r="5" fill="#e6f3ea" stroke="#5c8a6b" /><path d="M6 3c2-1 3 0 3 1.500S7 6 7 7.500 5 8 4.500 6.500zM10 6c1.500-.5 2.500 0 3 1-.5 2-1.500 3-2.500 3.500-1-1-1.500-3-.5-4.500z" fill="#217a46" stroke="none" /><path d="M4 1.500C0 6 3 12.500 9 12.500c2 0 3-.5 4-1.500M8.500 12.500V15M5 15h7" /></>],
  ["Filled map", <><path d="M1 2.500c4 2 5-1 7 0s4-1 7-.5c0 4-1 5-1.500 7-1 3-3 4-5 5.500C6 13 1 11 1 2.500z" fill={G} /><path d="M1 2.500c3 1.500 4 .5 5.500 0L7 7l-2 4.500C3 10 1 7 1 2.500zM10 7l4-1c0 4-2 6-5 8z" fill={L} stroke={B} /></>],
  ["Azure map", <><path d="M9 0 2 15.500l6-4z" fill="#4db0e6" stroke="none" /><path d="M9 0 14 15.500l-6-4z" fill="#1779ba" stroke="none" /></>],
  ["Gauge", <><path d="M.5 11.500a7.500 7.500 0 0 1 15 0h-4a3.500 3.500 0 0 0-7 0z" fill="#fff" /><path d="M.5 11.500A7.500 7.500 0 0 1 10 4.300l-2 3.700a3.500 3.500 0 0 0-3.500 3.500z" fill={L} stroke={B} /><path d="m8 11.500 3.500-5" strokeWidth="1.300" /></>],
  ["Card", <><path d="M.5 2.500h15v11H.5z" fill="#fff" /><text x="8" y="10.500" fontSize="7" fill={B} stroke="none" textAnchor="middle">123</text></>],
  ["Multi-row card", <><path d="M1 1.500h14v13H1z" fill="#fff" strokeWidth="1.300" /><path d="M4 4v8" /><path d="M5.500 5h7M5.500 8h6M5.500 11h4" stroke={B} strokeWidth="1.300" /></>],
  ["KPI", <><path d="M.5 2.500h15v11H.5z" fill="#fff" /><path d="m2 10.500 3-5 3 5z" fill="#4aa564" stroke="none" /><path d="M8 5.500h6l-3 5z" fill="#d64550" stroke="none" /></>],
  ["Slicer", <><path d="M1 14.500v-13h14V6" /><path d="M1 1.500h14V4H1z" fill={G} /><path d="M3 6.500h2v2H3zM3 10.500h2v2H3zM1 14.500h6" /><path d="M7 7h9l-3.500 4v4l-2-1v-3z" fill="#fff" /></>],
  ["Table", <><path d="M1 1.500h14v13H1z" fill="#fff" /><path d="M1 1.500h14V4H1z" fill={G} /><path d="M1 7.500h14M1 11h14M5.500 4v10.500M10.500 4v10.500" /></>],
  ["Matrix", <><path d="M1 1.500h14v13H1z" fill="#fff" /><path d="M5.500 8H15v6.500H5.500zM10.500 4H15v4h-4.500z" fill={L} stroke={B} /><path d="M1 1.500h14V4H1z" fill={K} /><path d="M1 7.500h14M1 11h14M5.500 4v10.500M10.500 4v10.500" /></>],
  ["R script visual", <text x="8" y="13" fontSize="14" fontWeight="700" fill="#2f8ac9" stroke="none" textAnchor="middle">R</text>],
  ["Python visual", <text x="8" y="12" fontSize="14" fontWeight="700" fill="#2f8ac9" stroke="none" textAnchor="middle">Py</text>],
  ["Key influencers", <><path d="M1.500 0v14.500H15M2 4.500h9M2 8h5M2 11.500h2" /><circle cx="12.500" cy="3.500" r="2" fill={L} stroke={B} /><circle cx="8" cy="8" r="1.300" /><circle cx="5" cy="11.500" r="1.300" /></>],
  ["Decomposition tree", <><path d="M0 5.500h5v4H0zM9.500 1.500h6v3h-6zM9.500 6.500h6v3h-6zM9.500 11.500h6v3h-6z" fill={L} stroke={B} /><path d="M5 7.500h4.500M7 3v10M7 3h2.500M7 13h2.500" /></>],
  ["Q&A", <path d="M.5 2.500h15v9H8l-4 3.500v-3.500H.5z" fill="#fff" stroke={B} strokeWidth="1.200" />],
  ["Smart narrative", <><path d="M3.500 4V1.500h7l3 3v10h-10V11M10.500 1.500v3h3" fill="#fff" /><path d="M7 8.500h4M6 11.500h5.500" /><circle cx="3.500" cy="7.500" r="2" fill={L} stroke={B} /></>],
  ["Goals", <><path d="M4.500 1.500h7v5c0 2-1.500 3.500-3.500 3.500S4.500 8.500 4.500 6.500zM4.500 3H1c0 3 1 4.500 3.800 4.500M11.500 3H15c0 3-1 4.500-3.800 4.500M8 10v3M4.500 14.500h7l-1-2h-5z" fill="#fff" strokeWidth="1.200" /></>],
  ["Paginated report", <><path d="M2.500.500h7.500l3.500 3.500v11.500h-11zM10 .5V4h3.500" fill="#fff" strokeWidth="1.200" /><path d="M5 10h1.500v3.500H5zM7.500 11.500H9v2H7.500zM10 8h1.500v5.500H10z" fill={K} stroke="none" /></>],
  ["New card", <><path d="M.5 4.500h15v9H.5z" fill="#fff" /><text x="9.500" y="11.800" fontSize="7" fill={B} stroke="none" textAnchor="middle">123</text>{bolt}</>],
  ["New slicer", <><path d="M2.500 14.500v-12H15V6M2.500 4.500H15M4.500 8.500h2v2h-2zM2.500 14.500H8" /><path d="M7.500 7.500H16l-3 3.500v4l-2.500-1v-3z" fill="#fff" />{bolt}</>],
  ["ArcGIS", <><path d="M1.500 1.500h13v13h-13z" fill="#d8ecfa" stroke={B} strokeWidth="1.400" /><path d="M2 11h4V6h4V2M7 14v-4h6" stroke={B} strokeWidth="1.300" /><path d="M.5.500h4v4l-2 3-2-3z" fill="#d5761d" stroke="none" /><circle cx="13.300" cy="13.300" r="2.200" fill="#d5761d" stroke="none" /></>],
  ["Power Apps", <path d="M8 .8 11.600 4.400 8 8 4.400 4.400zM11.600 4.400 15.200 8 11.600 11.600 8 8zM8 8l3.600 3.600L8 15.200 4.400 11.600zM4.400 4.400 8 8l-3.600 3.600L.8 8z" stroke="#a349a4" strokeWidth="1.200" strokeLinejoin="round" />],
  ["Power Automate", <path d="M1 2.500h9.500L15.300 8l-4.800 5.500H1L5.800 8zM10.500 2.500 3.500 11M12.500 5.500 6 13.500" stroke={B} strokeWidth="1.200" strokeLinejoin="round" />],
  ["More visuals", <path d="M2 6h1.500v1.500H2zM7.200 6h1.500v1.500H7.200zM12.500 6H14v1.500h-1.500z" fill={K} stroke="none" />],
];

function Toggle({ label, on }) {
  return (
    <label className="flex h-[22px] items-center justify-between pl-[9px] pr-[17px] text-[10px] text-[#323130]">
      {label}
      <input type="checkbox" role="switch" defaultChecked={on} className="sr-only" />
      <span
        className={`flex h-[14px] w-[27px] items-center justify-between rounded-full border px-[3px] text-[8px] ${
          on ? "border-[#117865] bg-[#117865] text-white" : "flex-row-reverse border-[#8a8886] bg-white text-[#605e5c]"
        }`}
      >
        {on ? "On" : "Off"}
        <span className={`size-[7px] rounded-full ${on ? "bg-white" : "bg-[#605e5c]"}`} />
      </span>
    </label>
  );
}

function Visualizations() {
  return (
    <aside className="w-[150px] shrink-0 border-l border-[#d2d0ce] bg-[#f3f2f1] text-[10px] text-[#323130]">
      <div className="flex h-[30px] items-center justify-between pl-[6px] pr-[5px]">
        <h2 className="text-[13px] font-bold text-[#252423]">Visualizations</h2>
        <button aria-label="Collapse visualizations"><DoubleChevron /></button>
      </div>
      <h3 className="pl-[6px] leading-[15px] text-[#252423]">Build visual</h3>
      <div className="flex h-[30px] items-start pl-[6px] pt-px">
        <button aria-label="Build visual" className="flex size-[27px] items-center justify-center rounded-xs bg-[#d2d0ce]">
          <Svg w={22} h={22}>
            <path d="M1 2.500h16" stroke="#252423" />
            <path d="M1.500 6h19v6h-19zM1.500 15h19v6h-19z" fill="#117865" stroke="#252423" strokeDasharray="1.500 1" />
          </Svg>
        </button>
        <button aria-label="Format visual" className="ml-[31px] mt-[3px]">
          <Svg w={22}>
            <path d="M8 20.500H1.500v-19h8l5 5V9M9.500 1.500v5h5" stroke="#252423" />
            <path d="M20.500 8c-4 2-7 6-8.500 9l2 1.500c3-3 5.500-6.500 6.500-10.500zM12 17c-2 0-2 3-4 3.500 3 1 5.500.5 6-2z" fill="#fff" stroke="#252423" />
          </Svg>
        </button>
      </div>
      <div className="flex h-[9px] items-end">
        <span className="h-px w-[13px] bg-[#a19f9d]" />
        <Svg w={14} h={7}><path d="M0 6.500h.5L7 .7l6.500 5.800h.5" stroke="#a19f9d" /></Svg>
        <span className="h-px flex-1 bg-[#a19f9d]" />
      </div>
      <div className="grid grid-cols-[repeat(6,23px)] auto-rows-[23px] border-b border-[#e1dfdd] pb-[5px] pl-[5px] pt-[6px]">
        {visualIcons.map(([name, art]) => (
          <button key={name} aria-label={name} className="flex items-center justify-center">
            <Svg w={16} className="overflow-visible">{art}</Svg>
          </button>
        ))}
      </div>
      <h3 className="pl-[9px] pt-[5px] leading-[16px]">Values</h3>
      <div className="px-[4px] pt-[3px]">
        <FieldWell cls="h-[24px] rounded-xs border border-dashed border-[#c8c6c4] pl-[7px]">Add data fields here</FieldWell>
      </div>
      <h3 className="pl-[9px] pt-[6px] leading-[18px]">Drill through</h3>
      <Toggle label="Cross-report" />
      <Toggle label="Keep all filters" on />
      <div className="px-[4px] pt-[5px]">
        <FieldWell cls="h-[22px] whitespace-nowrap rounded-xs border border-dashed border-[#c8c6c4] pl-[5px]">
          Add drill-through fields here
        </FieldWell>
      </div>
    </aside>
  );
}

function DataPane() {
  return (
    <aside className="w-[151px] shrink-0 border-l border-[#d2d0ce] bg-[#f3f2f1] text-[10px] text-[#323130]">
      <div className="flex h-[30px] items-center justify-between pl-[7px] pr-[6px]">
        <h2 className="text-[13px] font-bold text-[#252423]">Data</h2>
        <button aria-label="Collapse data"><DoubleChevron /></button>
      </div>
      <div className="px-[3px] pt-[6px]">
        <label className="flex h-[24px] items-center rounded-xs border border-[#a19f9d] bg-white pl-[6px]">
          <Magnifier w={13} />
          <input
            aria-label="Search data"
            placeholder="Search"
            className="ml-[4px] w-[100px] bg-transparent text-[11px] outline-none placeholder:text-[#484644]"
          />
        </label>
      </div>
      <button className="mt-[7px] flex h-[18px] items-center pl-[8px]">
        <Svg w={6} h={9}><path d="m1 .7 4 3.800-4 3.800" /></Svg>
        <Svg w={10} className="ml-[5px]">
          <rect x=".5" y=".5" width="9" height="9" rx="1" />
          <path d="M.5 3.500h9M.5 6.500h9M3.500.5v9M6.500.5v9" />
        </Svg>
        <span className="ml-[5px]">supply_chain_data</span>
      </button>
    </aside>
  );
}

function PageTabs() {
  return (
    <div className="flex h-[29px] shrink-0 items-stretch bg-[#f3f2f1] text-[10px]">
      <button aria-label="Desktop layout" className="ml-[8px] flex w-[20px] flex-col items-center justify-end gap-[7px] pb-[3px]">
        <Svg w={16} h={12}><path d="M.5.500h15v8.500H.5zM8 9v2.500M5 11.500h6" stroke="#605e5c" /></Svg>
        <span className="h-[3px] w-full rounded-full bg-[#117865]" />
      </button>
      <button aria-label="Mobile layout" className="ml-[20px] flex items-center pb-[4px]">
        <Svg w={12} h={17}><path d="M.8.800h10.400v15.400H.8zM4.500 13.500h3" stroke="#605e5c" strokeWidth="1.200" /></Svg>
      </button>
      <button aria-label="Previous page" className="ml-[17px]">
        <Svg w={4} h={7}><path d="M4 0v7L0 3.500z" fill="#c8c6c4" stroke="none" /></Svg>
      </button>
      <button aria-label="Next page" className="ml-[15px]">
        <Svg w={4} h={7}><path d="M0 0v7l4-3.500z" fill="#c8c6c4" stroke="none" /></Svg>
      </button>
      <button className="ml-[5px] w-[63px] border-l border-[#8a8886] bg-white text-[#323130]">Page 1</button>
      <button className="relative w-[65px] border-b-[3px] border-l border-[#117865] border-l-[#e1dfdd] bg-white pt-[3px] font-bold text-[#252423]">
        Page 2
        <span className="absolute right-[3px] top-[1px] text-[10px] font-normal leading-[12px]">x</span>
      </button>
      <button aria-label="New page" className="my-px flex w-[33px] items-center justify-center bg-[#117865]">
        <Svg w={10}><path d="M5 .5v9M.5 5h9" stroke="#fff" strokeWidth="2.200" /></Svg>
      </button>
    </div>
  );
}

function StatusBar() {
  return (
    <footer className="flex h-[20px] shrink-0 items-center border-t border-[#e1dfdd] bg-[#f3f2f1] pl-[3px] pr-[14px] text-[10px] text-[#484644]">
      <span className="flex-1">Page 2 of 2</span>
      <button aria-label="Zoom out">-</button>
      <span className="relative mx-[5px] flex items-center">
        <span className="absolute left-[42px] h-[5px] w-px bg-[#8a8886]" />
        <input
          type="range"
          aria-label="Zoom"
          min="10"
          max="200"
          defaultValue="73"
          className="h-[10px] w-[84px] appearance-none bg-[linear-gradient(#605e5c,#605e5c)] bg-[length:100%_1px] bg-center bg-no-repeat [&::-webkit-slider-thumb]:h-[9px] [&::-webkit-slider-thumb]:w-[3px] [&::-webkit-slider-thumb]:appearance-none [&::-webkit-slider-thumb]:bg-[#484644]"
        />
      </span>
      <button aria-label="Zoom in">+</button>
      <span className="ml-[11px]">73%</span>
      <button aria-label="Fit to page" className="ml-[15px]">
        <Svg w={13} h={11}>
          <path d="M.5.500h12v10H.5z" stroke="#605e5c" />
          <path d="M3 4.500V3h2M8 3h2v1.500M10 6.500V8H8M5 8H3V6.500" stroke={B} />
        </Svg>
      </button>
    </footer>
  );
}

const apps = [
  ["Copilot", <>
    <path d="M6 2h6l-3 10c-.5 2-2 3-4 3H2c-1.500 0-2-1.500-1.500-3L3 4.500C3.500 3 4.500 2 6 2z" fill="#2aa7d8" />
    <path d="M6 2h6c1.500 0 2 1 2.500 3l.5 2H11L8 2z" fill="#2162c9" />
    <path d="M.5 12 2 8l6 1-1 4c-.5 1.500-1.500 2-3 2H2C.7 15 0 13.500.5 12z" fill="#9bc53d" />
    <path d="M12 6h5c2 0 2.500 1.500 2 3l-2 6c-.5 2-1.500 3-3.500 3H9z" fill="#d957a8" />
    <path d="M12 6h5c2 0 2.500 1.500 2 3l-1 3-7-1z" fill="#b266d9" />
    <rect x="5" y="12" width="14" height="7.500" rx="1" fill="#f6c026" />
    <text x="12" y="18" fontSize="6" fontWeight="700" fill="#222" textAnchor="middle">PRE</text>
  </>],
  ["Chat", <>
    <path d="M10 1a9 9 0 1 1-4 17l-5 1V10a9 9 0 0 1 9-9z" fill="#6a63c4" />
    <rect x="5" y="6.500" width="7" height="7" rx="1" fill="#fff" />
    <path d="m12.500 9 3-2v6l-3-2z" fill="#fff" />
  </>],
  ["WhatsApp", <>
    <path d="M10 1.200A8.800 8.800 0 1 1 5.800 17.700L1.200 18.800l1.200-4.500A8.800 8.800 0 0 1 10 1.200z" fill="none" stroke="#2fc766" strokeWidth="1.800" />
    <path d="M6.500 5.500c1-1 1.500-.5 2 .5.700 1.500.5 1.700-.3 2.700.7 1.500 2 2.500 3.300 3 .8-1.200 1.200-1.300 2.500-.6 1.300.6 1.300.9.600 2-1.200 1.600-3.600 1.300-5.600 0C7 11.700 5 9 5.500 7z" fill="#2fc766" />
  </>],
  ["File Explorer", <>
    <path d="M.5 3c0-.8.500-1 1-1h5l2 2H19c.5 0 1 .5 1 1v13H.5z" fill="#e0a42b" />
    <path d="M.5 6h19v11c0 .8-.5 1-1 1h-17c-.5 0-1-.5-1-1z" fill="#ffd24d" />
    <path d="M4 14.500c0-1 .5-1.500 1.500-1.500h9c1 0 1.500.5 1.500 1.500V18H4z" fill="#1c6fb8" />
  </>],
  ["Microsoft Store", <>
    <path d="M6 5V2.500C6 1.700 6.500 1 7.500 1h5c1 0 1.500.700 1.500 1.500V5" fill="none" stroke="#4fb3e8" strokeWidth="1.300" />
    <path d="M.5 4h19v13c0 1-.5 2-2 2h-15c-1.500 0-2-1-2-2z" fill="#f5f5f5" />
    <path d="M6 8h3.500v3.500H6z" fill="#e8532b" /><path d="M10.500 8H14v3.500h-3.500z" fill="#7db928" />
    <path d="M6 12.500h3.500V16H6z" fill="#1f9fe0" /><path d="M10.500 12.500H14V16h-3.500z" fill="#f7b81c" />
  </>],
  ["Get Help", <>
    <circle cx="10" cy="10.500" r="9.500" fill="#e8f4fb" />
    <circle cx="10" cy="10.500" r="8.300" fill="#1290d0" />
    <path d="M6.500 8c.3-4.500 6.500-4 6.200-.5C12.500 9.700 9.700 9.700 9.700 12.500" fill="none" stroke="#fff" strokeWidth="2.300" />
    <circle cx="9.700" cy="15.700" r="1.400" fill="#fff" />
    <circle cx="17" cy="3" r="6" fill="#fcb514" />
  </>],
  ["McAfee", <path d="m2 1 8 4.500L18 1v13.500L10 19l-8-4.500zM6 7.500v5l4 2.300 4-2.300v-5l-4 2.200z" fill="#b92d33" fillRule="evenodd" />],
  ["myHP", <>
    <path d="M.5 0h19v20H.5z" fill="#0a96d6" />
    <text x="10" y="12.500" fontSize="7" fontStyle="italic" fontWeight="700" fill="#fff" textAnchor="middle">myhp</text>
  </>],
];

function Taskbar() {
  return (
    <footer className="grid h-[40px] shrink-0 grid-cols-[1fr_auto_1fr] items-center border-t border-[#484644] bg-[#1c1c1c] text-[10px] text-white">
      <button aria-label="Weather" className="justify-self-start pl-[9px]">
        <Svg w={20}>
          <circle cx="9.500" cy="9.500" r="9" fill="#8f9ba5" stroke="none" />
          <path d="M10 15.500c-3 0-3-4 0-4 .5-3 5-3 5.500-.5 4-.5 4.500 4.500 1.500 4.500z" fill="#f0f3f6" stroke="none" />
        </Svg>
      </button>
      <div className="flex items-center pl-[7px]">
        <button aria-label="Start">
          <Svg w={20}>
            <path d="M0 0h9.500v9.500H0z" fill="#5fd3f9" stroke="none" />
            <path d="M10.500 0H20v9.500h-9.500zM0 10.500h9.500V20H0z" fill="#38bdf8" stroke="none" />
            <path d="M10.500 10.500H20V20h-9.500z" fill="#1a9cf2" stroke="none" />
          </Svg>
        </button>
        <label className="ml-[11px] flex h-[26px] w-[182px] items-center rounded-full bg-[#f2f2f2] pl-[9px]">
          <Svg w={13}>
            <circle cx="5.500" cy="5.500" r="4.800" stroke="#222" strokeWidth="1.400" />
            <path d="m9 9 3.500 3.500" stroke="#222" strokeWidth="1.400" />
          </Svg>
          <input
            aria-label="Search Windows"
            placeholder="Search"
            className="ml-[8px] w-[120px] bg-transparent text-[12px] text-[#222] outline-none placeholder:text-[#5c5c5c]"
          />
        </label>
        <div className="ml-[10px] flex gap-[17px]">
          {apps.map(([name, art]) => (
            <button key={name} aria-label={name}>
              <svg width="20" height="20" viewBox="0 0 20 20" overflow="visible">{art}</svg>
            </button>
          ))}
        </div>
        <button aria-label="Power BI" className="ml-[9px] flex h-[34px] w-[32px] flex-col items-center justify-end gap-[3px] rounded-sm bg-[#282828]">
          <svg width="20" height="20" viewBox="0 0 20 20">
            <path d="M10 0h6c.6 0 1 .4 1 1v19h-7z" fill="#d99a1c" />
            <path d="M6 5h6c.6 0 1 .4 1 1v14H6z" fill="#f2c230" />
            <path d="M2 10h6c.6 0 1 .4 1 1v9H3c-.6 0-1-.4-1-1z" fill="#f8e08a" />
          </svg>
          <span className="h-[2px] w-[13px] rounded-full bg-[#4cc2ff]" />
        </button>
      </div>
      <div className="flex items-center justify-end pr-[16px]">
        <button aria-label="Hidden icons">
          <Svg w={10} h={6}><path d="m.7 5.300 4.300-4.300 4.300 4.300" stroke="#fff" strokeWidth="1.200" /></Svg>
        </button>
        <Svg w={15} h={12} className="ml-[14px]">
          <path d="M4 10c-4 0-4-5-.5-5C4.500.5 10 1 10.500 4c3.500-.5 4 5 1 6z" fill="#b9bec4" stroke="none" />
          <circle cx="10.500" cy="8.500" r="3.500" fill="#2d7cc0" stroke="#fff" />
        </Svg>
        <button className="ml-[14px] text-center leading-[13px]">ENG<br />IN</button>
        <button aria-label="Network, volume and battery" className="ml-[14px] flex items-center gap-[6px]">
          <Svg w={14} h={12}>
            <path d="M.7 4.500c4-4 8.600-4 12.600 0M2.700 7c3-2.500 5.600-2.500 8.600 0M4.700 9c2-1.500 2.600-1.500 4.600 0" stroke="#fff" strokeWidth="1.100" />
            <circle cx="7" cy="10.500" r="1.200" fill="#fff" stroke="none" />
          </Svg>
          <Svg w={14} h={12}>
            <path d="M.7 4v4h2.500L6.500 11V1L3.200 4zM8.500 4c1 1 1 3 0 4M10.200 2.500c2 2 2 5 0 7M12 1c2.500 3 2.500 7 0 10" stroke="#fff" />
          </Svg>
          <Svg w={14} h={12}>
            <path d="M5 2.500h6.500v7.500h-10V8M12.500 5v2.500" stroke="#fff" strokeWidth="1.200" />
            <path d="M5 0c1 4 0 7-4.500 7C0 3 2 1 5 0zM6 5h4v3.500H4z" fill="#fff" stroke="none" />
          </Svg>
        </button>
        <button className="ml-[13px] text-right leading-[13px]">10:56<br />27-03-2024</button>
        <button aria-label="Notifications" className="ml-[7px]">
          <Svg w={12} h={13}>
            <path d="M6.500 1.700C4 1.500 2.500 3 2.500 5v3L1 10h10L9.700 8V7M4.500 10.500c.5 1.800 2.500 1.800 3 0M8 1h3L8 4.500h3" stroke="#fff" />
          </Svg>
        </button>
      </div>
    </footer>
  );
}

export default function App() {
  return (
    <div className="flex h-screen flex-col overflow-hidden bg-white font-['Lato','Open_Sans',sans-serif]">
      <TitleBar />
      <Ribbon />
      <div className="flex min-h-0 flex-1">
        <ViewRail />
        <div className="flex min-w-0 flex-1 flex-col">
          <div className="flex min-h-0 flex-1">
            <main className="relative min-w-0 flex-1 overflow-hidden bg-white">
              <div className="h-[437px] border-b-2 border-dotted border-[#797775]" />
              <DefectPie />
              <RevenueColumns />
              <CostColumns />
            </main>
            <Filters />
          </div>
          <PageTabs />
        </div>
        <Visualizations />
        <DataPane />
      </div>
      <StatusBar />
      <Taskbar />
    </div>
  );
}
